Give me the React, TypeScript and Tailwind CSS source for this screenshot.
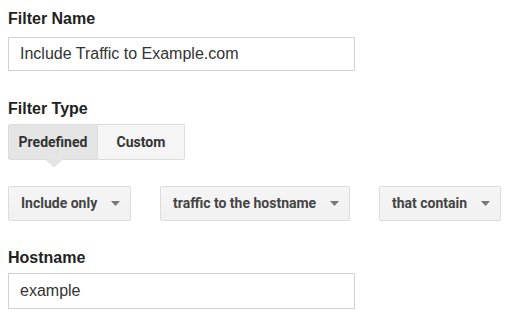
import React from 'react';

function Caret() {
  return (
    <svg width="9" height="5" viewBox="0 0 9 5" className="shrink-0">
      <path d="M0 0 L9 0 L4.5 5 Z" fill="#777" />
    </svg>
  );
}

function Select({ label, width }: { label: string; width: string }) {
  return (
    <div
      className={`${width} h-[35px] flex items-center justify-between pl-[12px] pr-[10px] rounded-[2px] border border-[#dcdcdc] bg-gradient-to-b from-[#f5f5f5] to-[#f1f1f1] text-[14px] font-bold text-[#444]`}
    >
      <span>{label}</span>
      <Caret />
    </div>
  );
}

export default function App() {
  return (
    <div className="w-[517px] h-[327px] bg-white pl-[8px] pt-[10px] font-['Roboto',sans-serif] text-[#222]">
      <div className="text-[16px] leading-[18px] font-bold font-['Liberation_Sans',Arial,sans-serif] text-[#222]">
        Filter Name
      </div>
      <div className="mt-[9px] w-[347px] h-[34px] border border-[#d2d2d2] flex items-center pl-[11px] text-[16px] font-['Liberation_Sans',Arial,sans-serif] text-[#333]">
        Include Traffic to Example.com
      </div>

      <div className="mt-[29px] text-[16px] leading-[18px] font-bold font-['Liberation_Sans',Arial,sans-serif] text-[#222]">
        Filter Type
      </div>
      <div className="mt-[6px] flex">
        <div className="relative w-[90px] h-[36px] flex items-center justify-center border border-[#dcdcdc] rounded-l-[2px] bg-[#e5e5e5] text-[14px] font-bold text-[#333]">
          Predefined
          <svg
            width="16"
            height="9"
            viewBox="0 0 16 9"
            className="absolute left-[37px] top-[34px]"
          >
            <path d="M0 0.5 L8 8 L16 0.5" fill="#e5e5e5" stroke="#dcdcdc" />
            <rect x="0" y="0" width="16" height="0.6" fill="#e5e5e5" />
          </svg>
        </div>
        <div className="w-[87px] h-[36px] flex items-center justify-center border border-l-0 border-[#dcdcdc] rounded-r-[2px] bg-[#f5f5f5] text-[14px] font-bold text-[#333]">
          Custom
        </div>
      </div>

      <div className="mt-[26px] flex gap-[29px]">
        <Select label="Include only" width="w-[123px]" />
        <Select label="traffic to the hostname" width="w-[190px]" />
        <Select label="that contain" width="w-[122px]" />
      </div>

      <div className="mt-[28px] text-[16px] leading-[18px] font-bold font-['Liberation_Sans',Arial,sans-serif] text-[#222]">
        Hostname
      </div>
      <div className="mt-[6px] w-[347px] h-[36px] border border-[#d2d2d2] flex items-center pl-[11px] text-[16px] font-['Liberation_Sans',Arial,sans-serif] text-[#333]">
        example
      </div>
    </div>
  );
}
